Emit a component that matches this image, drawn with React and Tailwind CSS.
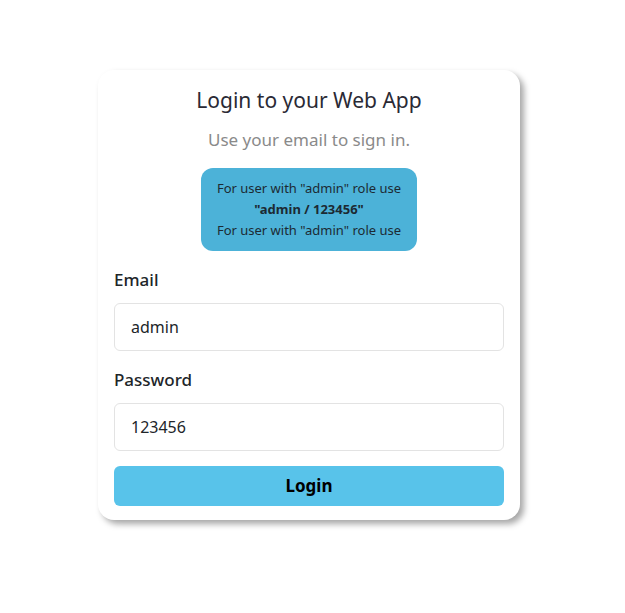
import React from "react";

const Field = ({ label, value, type }) => (
  <div className="flex flex-col">
    <label className="text-[17px] leading-6 font-medium text-[#212529] mt-[17px]">
      {label}
    </label>
    <input
      type="text"
      defaultValue={value}
      data-type={type}
      className="mt-[11px] h-12 w-full rounded-md border border-[#e3e3e3] bg-white px-4 text-[16px] text-[#212529] outline-none"
    />
  </div>
);

export default function App() {
  return (
    <div
      className="min-h-screen bg-white flex justify-center pt-[70px] pr-[7px]"
      style={{ fontFamily: '"Noto Sans", "Open Sans", sans-serif' }}
    >
      <div className="w-[422px] h-fit rounded-2xl bg-white px-4 pt-[15px] pb-[14px] shadow-[4px_4px_6px_rgba(0,0,0,0.35)]">
        <h1 className="text-center text-[21px] leading-[30px] text-[#2a2a35]">
          Login to your Web App
        </h1>
        <p className="mt-3 text-center text-[17px] leading-[26px] text-[#8a8a8a]">
          Use your email to sign in.
        </p>
        <div className="flex justify-center mt-[15px]">
          <div className="w-[216px] rounded-xl bg-[#4cb2d8] py-[10px] text-center text-[13px] leading-[21px] text-[#1c2a33]">
            <div>For user with "admin" role use</div>
            <div className="font-bold">"admin / 123456"</div>
            <div>For user with "admin" role use</div>
          </div>
        </div>
        <Field label="Email" value="admin" type="email" />
        <Field label="Password" value="123456" type="password" />
        <button className="mt-[15px] h-10 w-full rounded-md bg-[#58c3ea] text-[17px] font-bold text-black">
          Login
        </button>
      </div>
    </div>
  );
}
